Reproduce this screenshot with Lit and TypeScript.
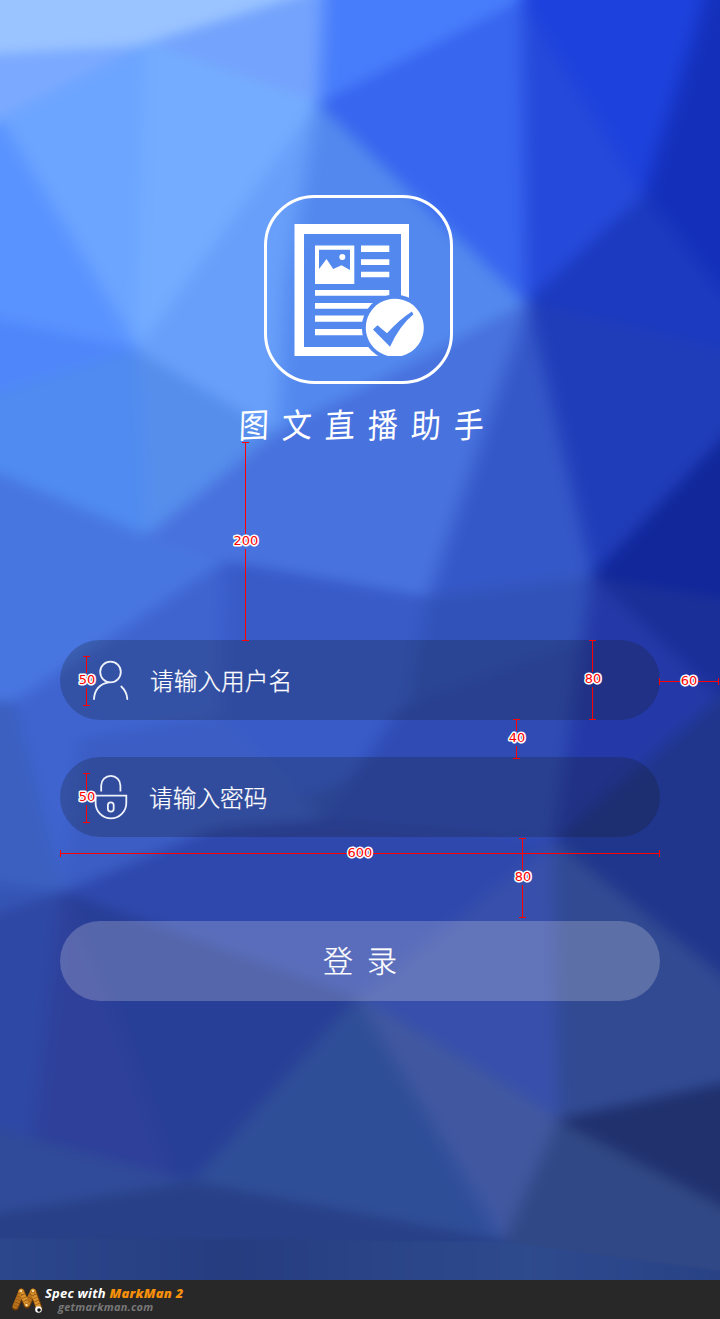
import { LitElement, html, svg, css } from "lit";
import { customElement } from "lit/decorators.js";

type Facet = [string, string];

// Low-poly backdrop: fill colour and corner points of each facet.
const facets: Facet[] = [
  ["#7ba9ff", "-40,53 147,44 0,120 -40,145"],
  ["#9ac4ff", "-40,-40 390,-40 290,0 147,44 -40,55"],
  ["#74a3fd", "147,44 290,0 390,-40 326,-40 322,104"],
  ["#6ca5ff", "0,120 147,44 138,350"],
  ["#74adff", "147,44 318,104 138,350"],
  ["#5993ff", "-40,145 0,120 138,350 0,320 -40,312"],
  ["#4f87fa", "-40,310 0,320 138,350 0,394 -40,406"],
  ["#4f8bf0", "-40,406 0,394 138,350 147,537 0,475 -40,460"],
  ["#568eec", "138,350 278,432 222,485 147,537"],
  ["#689ffa", "318,104 138,350 278,432 290,300"],
  ["#5389ee", "318,104 527,303 400,370 278,432 288,280"],
  ["#477dfb", "326,-40 580,-40 523,0 320,104"],
  ["#3866ef", "320,104 523,0 527,303"],
  ["#2549da", "523,0 645,195 527,303"],
  ["#1d41dc", "523,-40 715,-40 700,20 645,195 523,0"],
  ["#1430bb", "715,-40 770,-40 770,330 720,290 645,195 700,20"],
  ["#1b3abf", "645,195 720,290 770,330 770,362 527,303"],
  ["#203db9", "527,303 770,362 770,390 592,577"],
  ["#3558c8", "527,303 592,577 427,598"],
  ["#4872de", "527,303 427,598 225,562 147,537 278,432 400,370"],
  ["#11279a", "770,390 592,577 770,606"],
  ["#4876e0", "-40,460 0,475 147,537 225,562 14,703 -40,720"],
  ["#3f64d0", "225,562 14,703 64,893 216,829 222,760"],
  ["#385bc8", "225,562 427,598 400,760 216,829"],
  ["#3153b9", "427,598 592,577 560,690 400,760"],
  ["#304cb4", "400,710 592,640 575,840 321,825"],
  ["#1a2f98", "592,577 770,606 770,660 720,699 650,690"],
  ["#2439a7", "592,577 720,699 555,842"],
  ["#20368c", "770,655 555,842 770,1015"],
  ["#3b60c0", "-40,700 14,703 64,893 0,886 -40,880"],
  ["#3555b5", "-40,880 64,893 -40,930"],
  ["#3b5dc4", "64,893 216,829 321,821 225,715 80,740"],
  ["#2e48ad", "64,893 216,829 321,821 555,842 358,998"],
  ["#3850ab", "358,998 555,842 560,1120"],
  ["#314a92", "555,842 770,1015 770,1074 560,1120"],
  ["#2e48a5", "-40,925 64,893 38,1145 -40,1125"],
  ["#283f97", "64,893 358,998 193,1183 35,1145"],
  ["#2e409a", "64,893 110,1000 175,1190 35,1145"],
  ["#2f4e98", "358,998 500,1242 193,1183"],
  ["#4158a0", "358,998 560,1120 505,1242"],
  ["#304b99", "-40,1120 193,1183 -40,1221"],
  ["#284087", "-40,1221 193,1183 505,1242 505,1265 -40,1265"],
  ["#304885", "560,1120 770,1230 770,1300 505,1265 505,1242"],
  ["#20316e", "560,1120 770,1074 770,1230"],
];

// Bottom strip, whose upper border reads crisper than the other facets.
const foot = "-40,1238 350,1240 505,1242 720,1271 770,1279 770,1340 -40,1340";

interface Mark {
  dir: "v" | "h";
  at: number;
  from: number;
  to: number;
  label: string;
  lx: number;
  ly: number;
}

const marks: Mark[] = [
  { dir: "v", at: 245, from: 442, to: 640, label: "200", lx: 246, ly: 540 },
  { dir: "v", at: 86, from: 656, to: 705, label: "50", lx: 87, ly: 679 },
  { dir: "v", at: 86, from: 773, to: 822, label: "50", lx: 87, ly: 796 },
  { dir: "v", at: 592, from: 640, to: 719, label: "80", lx: 593, ly: 678 },
  { dir: "v", at: 516, from: 719, to: 758, label: "40", lx: 517, ly: 737 },
  { dir: "v", at: 522, from: 838, to: 917, label: "80", lx: 523, ly: 876 },
  { dir: "h", at: 853, from: 60, to: 659, label: "600", lx: 360, ly: 852 },
  { dir: "h", at: 681, from: 659, to: 718, label: "60", lx: 689, ly: 680 },
];

@customElement("low-poly-backdrop")
class LowPolyBackdrop extends LitElement {
  static styles = css`
    :host { display: block; position: absolute; inset: 0; overflow: hidden; }
    svg { display: block; }
  `;
  render() {
    return html`<svg width="720" height="1280" viewBox="0 0 720 1280">
      <defs>
        <filter id="soft" filterUnits="userSpaceOnUse" x="-40" y="-40" width="810" height="1380" color-interpolation-filters="sRGB">
          <feGaussianBlur stdDeviation="8.5 6" />
        </filter>
        <filter id="fine" filterUnits="userSpaceOnUse" x="-40" y="-40" width="810" height="1380" color-interpolation-filters="sRGB">
          <feGaussianBlur stdDeviation="1.2" />
        </filter>
        <linearGradient id="floor" x1="0" x2="1" y1="0" y2="0">
          <stop offset="0" stop-color="#2e498f" />
          <stop offset="0.33" stop-color="#263d80" />
          <stop offset="0.7" stop-color="#2e4b8e" />
          <stop offset="1" stop-color="#284084" />
        </linearGradient>
      </defs>
      <rect width="720" height="1280" fill="#3455b8" />
      <g filter="url(#soft)">
        ${facets.map(([c, p]) => svg`<polygon points=${p} fill=${c} stroke=${c} stroke-width="2" />`)}
      </g>
      <polygon points=${foot} fill="url(#floor)" filter="url(#fine)" />
    </svg>`;
  }
}

@customElement("app-logo")
class AppLogo extends LitElement {
  static styles = css`
    :host { display: block; }
    svg { display: block; }
  `;
  render() {
    return html`<svg width="189" height="189" viewBox="264 195 189 189">
      <defs>
        <mask id="notch" maskUnits="userSpaceOnUse" x="264" y="195" width="189" height="189">
          <rect x="264" y="195" width="189" height="189" fill="#fff" />
          <circle cx="394.8" cy="327.5" r="33" fill="#000" />
        </mask>
        <clipPath id="base"><rect x="264" y="195" width="189" height="161" /></clipPath>
      </defs>
      <rect x="265.5" y="196.5" width="186" height="186" rx="49" fill="none" stroke="#fff" stroke-width="3" />
      <g mask="url(#notch)" fill="#fff">
        <path fill-rule="evenodd" d="M294.5 224H409V356H294.5ZM304 234V347H401V234Z" />
        <path fill-rule="evenodd" d="M315 245.5H354.3V284H315ZM319 249.7V269L326.5 259L333.2 269L341.5 265.3L350 270V249.7Z" />
        <circle cx="342.3" cy="257" r="3" />
        <path d="M361 245.5h28.3v6.6H361zM361 259.2h28.3v5.8H361zM361 271.8h28.3v5.5H361z" />
        <path d="M315 290h74.3v5.8H315zM315 303h74.3v5.8H315zM315 315.5h74.3v6.3H315zM315 329h74.3v6.3H315z" />
      </g>
      <g clip-path="url(#base)">
        <path fill="#fff" fill-rule="evenodd" d="M394.8 298.7A29 29 0 1 1 394.79 298.7ZM373 329.5L377.5 325.3L387 333.3Q400 319 412 311.5L413.3 314.5Q400 325 390 346.8Z" />
      </g>
    </svg>`;
  }
}

@customElement("spec-marks")
class SpecMarks extends LitElement {
  static styles = css`
    :host { display: block; position: absolute; inset: 0; }
    svg { display: block; }
    .rule { fill: #f00; }
    .num {
      font: 13px "DejaVu Sans", Verdana, sans-serif;
      fill: #f00;
      stroke: #fff;
      stroke-width: 3px;
      stroke-linejoin: round;
      paint-order: stroke;
      text-anchor: middle;
    }
  `;
  private bar(m: Mark) {
    const w = m.label.length * 4 + 1;
    if (m.dir === "v") {
      return svg`
        <rect class="rule" x=${m.at} y=${m.from} width="1" height=${m.ly - 6 - m.from} />
        <rect class="rule" x=${m.at} y=${m.ly + 9} width="1" height=${m.to - m.ly - 9} />
        <rect class="rule" x=${m.at - 3} y=${m.from} width="7" height="1" />
        <rect class="rule" x=${m.at - 3} y=${m.to} width="7" height="1" />`;
    }
    return svg`
      <rect class="rule" x=${m.from} y=${m.at} width=${m.lx - w - m.from} height="1" />
      <rect class="rule" x=${m.lx + w} y=${m.at} width=${m.to - m.lx - w} height="1" />
      <rect class="rule" x=${m.from} y=${m.at - 3} width="1" height="7" />
      <rect class="rule" x=${m.to} y=${m.at - 3} width="1" height="7" />`;
  }
  render() {
    return html`<svg width="720" height="1280" viewBox="0 0 720 1280">
      ${marks.map((m) => svg`${this.bar(m)}<text class="num" x=${m.lx} y=${m.ly + 5}>${m.label}</text>`)}
    </svg>`;
  }
}

@customElement("app-root")
class AppRoot extends LitElement {
  static styles = css`
    :host {
      display: flex;
      flex-direction: column;
      width: 720px;
      height: 1319px;
      overflow: hidden;
      font-family: "Noto Sans CJK SC", sans-serif;
      color: #fff;
    }
    .screen {
      position: relative;
      height: 1280px;
      flex: none;
    }
    .content {
      position: relative;
      display: flex;
      flex-direction: column;
      padding: 195px 60px 0;
    }
    app-logo { align-self: flex-start; margin-left: 204px; }
    .title {
      margin: 16px 0 0 179px;
      height: 46px;
      display: flex;
      gap: 13px;
      font-size: 30px;
      line-height: 46px;
      font-weight: 400;
    }
    .title span { transform: rotate(-3deg) skewX(-5deg) scaleY(1.12); }
    .field {
      display: flex;
      align-items: center;
      box-sizing: border-box;
      height: 80px;
      border-radius: 40px;
      background: rgba(20, 24, 28, 0.24);
      padding-left: 30px;
      font-size: 23.7px;
      font-weight: 300;
      line-height: 36px;
      -webkit-text-stroke: 0.25px #fff;
    }
    .user { margin-top: 194px; }
    .pass { margin-top: 37px; }
    .field svg { flex: none; margin-right: 20px; }
    .pass svg { margin-right: 19px; }
    .glyph { fill: none; stroke: #eef2fb; stroke-width: 1.8; }
    .login {
      margin-top: 84px;
      height: 80px;
      border: 0;
      padding: 0;
      border-radius: 40px;
      background: rgba(255, 248, 245, 0.21);
      color: #fff;
      font: 300 30px/80px "Noto Sans CJK SC", sans-serif;
      -webkit-text-stroke: 0.25px #fff;
      display: flex;
      justify-content: center;
      gap: 14px;
    }
    .login span { margin-top: -2px; }
    .credit {
      flex: none;
      height: 39px;
      background: #282828;
      display: flex;
      align-items: flex-start;
      font-family: "Open Sans", "Noto Sans", sans-serif;
      font-weight: 700;
      font-style: italic;
    }
    .credit svg { flex: none; margin: 5px 0 0 10px; }
    .lines { display: flex; flex-direction: column; }
    .l1 { font-size: 13px; line-height: 13px; margin-top: 7px; letter-spacing: 0.22px; white-space: nowrap; }
    .l1 b { color: #f7900a; }
    .l2 { font-size: 11px; line-height: 13px; padding-left: 13px; color: #777; letter-spacing: 0.25px; }
  `;

  render() {
    return html`
      <div class="screen">
        <low-poly-backdrop></low-poly-backdrop>
        <div class="content">
          <app-logo></app-logo>
          <div class="title">${[..."图文直播助手"].map((c) => html`<span>${c}</span>`)}</div>
          <div class="field user">
            <svg width="40" height="50" viewBox="90 655 40 50">
              <g class="glyph" stroke-linecap="round">
                <circle cx="110.5" cy="672" r="10.3" />
                <path d="M109 682.3C99 683.500 94.3 691 94 699M121.3 686.5C125 690 127 694 127.3 699" />
              </g>
            </svg>
            <span>请输入用户名</span>
          </div>
          <div class="field pass">
            <svg width="40" height="50" viewBox="90 772 40 50">
              <g class="glyph">
                <path d="M101.2 791.5V785.5A9.6 9.6 0 0 1 120.4 785.5V791.5" />
                <path d="M95.6 795.6H126.3V803A15.35 15.35 0 0 1 95.6 803Z" />
                <rect x="107.9" y="802.3" width="5.8" height="9.4" rx="2.9" />
              </g>
            </svg>
            <span>请输入密码</span>
          </div>
          <button class="login"><span>登</span><span>录</span></button>
        </div>
        <spec-marks></spec-marks>
      </div>
      <div class="credit">
        <svg width="35" height="30" viewBox="10 1285 35 30">
          <g fill="none" stroke-linecap="round" stroke-linejoin="round">
            <path d="M15.5 1307L21.5 1292L27 1305L33.5 1292L39 1308" stroke="#6b3a08" stroke-width="6.8" />
            <path d="M15.5 1306L21.5 1291.5M33 1291.5L27 1304" stroke="#b8731c" stroke-width="5.6" />
            <path d="M21 1291.5L27 1304M33 1291.5L38.5 1307" stroke="#d9922c" stroke-width="5.2" />
            <path d="M15.5 1306L21.5 1291.5M21.5 1291.5L27 1304M27 1304L33.5 1291.5M33.5 1291.5L38.5 1307" stroke="#8a4f10" stroke-width="4.6" stroke-dasharray=".6 2.6" stroke-linecap="butt" />
          </g>
          <circle cx="21" cy="1291" r="1.2" fill="#ffe0a0" />
          <circle cx="33" cy="1291" r="1.2" fill="#ffe0a0" />
          <circle cx="26.5" cy="1305" r="1.2" fill="#ffe0a0" />
          <circle cx="38.5" cy="1309.5" r="3.3" fill="#fff" />
          <circle cx="39" cy="1310" r="1.8" fill="#111" />
        </svg>
        <div class="lines">
          <div class="l1">Spec with <b>MarkMan 2</b></div>
          <div class="l2">getmarkman.com</div>
        </div>
      </div>
    `;
  }
}
